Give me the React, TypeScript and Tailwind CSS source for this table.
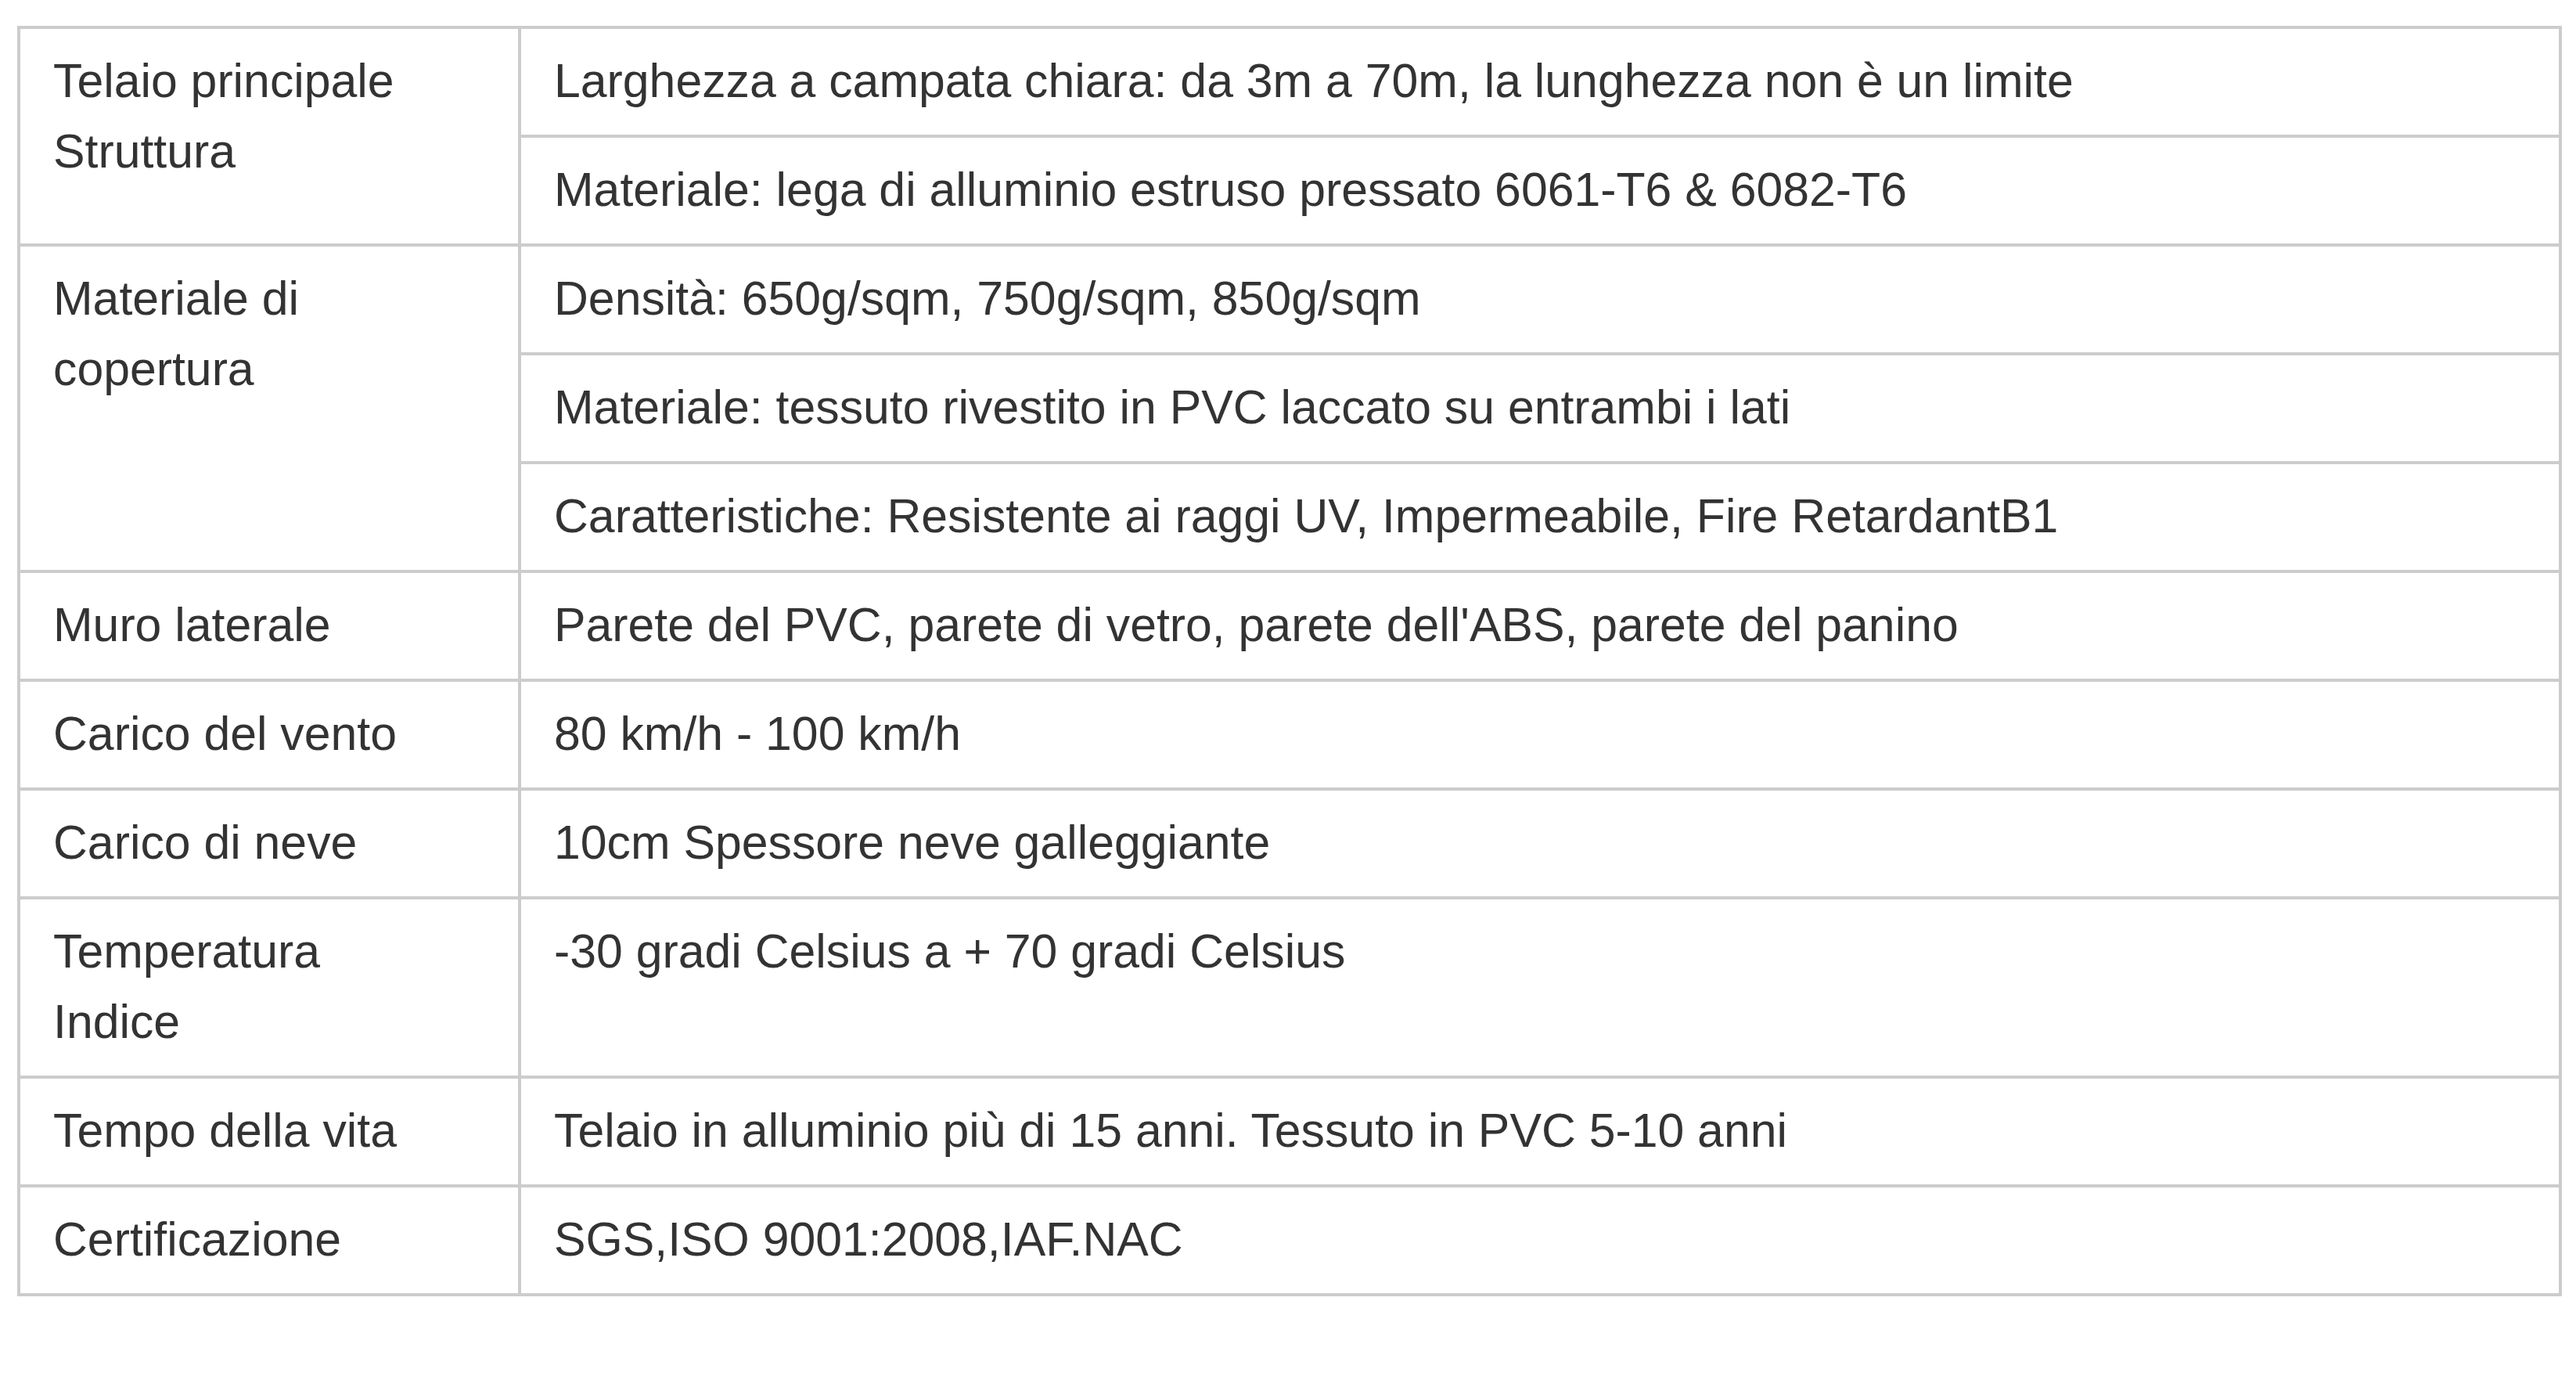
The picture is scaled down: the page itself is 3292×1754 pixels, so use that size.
const rows: { label: string[]; values: string[] }[] = [
  {
    label: ['Telaio principale', 'Struttura'],
    values: [
      'Larghezza a campata chiara: da 3m a 70m, la lunghezza non è un limite',
      'Materiale: lega di alluminio estruso pressato 6061-T6 & 6082-T6',
    ],
  },
  {
    label: ['Materiale di', 'copertura'],
    values: [
      'Densità: 650g/sqm, 750g/sqm, 850g/sqm',
      'Materiale: tessuto rivestito in PVC laccato su entrambi i lati',
      'Caratteristiche: Resistente ai raggi UV, Impermeabile, Fire RetardantB1',
    ],
  },
  { label: ['Muro laterale'], values: ["Parete del PVC, parete di vetro, parete dell'ABS, parete del panino"] },
  { label: ['Carico del vento'], values: ['80 km/h - 100 km/h'] },
  { label: ['Carico di neve'], values: ['10cm Spessore neve galleggiante'] },
  { label: ['Temperatura', 'Indice'], values: ['-30 gradi Celsius a + 70 gradi Celsius'] },
  { label: ['Tempo della vita'], values: ['Telaio in alluminio più di 15 anni. Tessuto in PVC 5-10 anni'] },
  { label: ['Certificazione'], values: ['SGS,ISO 9001:2008,IAF.NAC'] },
];

const cell = 'border-4 border-[#cccccc] pl-[42px] pr-[20px] pt-[21px] pb-[24px] align-top';

export default function App() {
  return (
    <div className="min-h-screen bg-white pt-[33px] pl-[22px] font-['Liberation_Sans',Arial,sans-serif] text-[60.75px] leading-[90px] text-[#333333]">
      <table className="w-[3252px] table-fixed border-collapse">
        <colgroup>
          <col className="w-[640px]" />
          <col />
        </colgroup>
        <tbody>
          {rows.map((row) =>
            row.values.map((value, i) => (
              <tr key={row.label.join(' ') + i}>
                {i === 0 && (
                  <td rowSpan={row.values.length} className={cell}>
                    {row.label.map((line) => (
                      <div key={line}>{line}</div>
                    ))}
                  </td>
                )}
                <td className={cell}>{value}</td>
              </tr>
            )),
          )}
        </tbody>
      </table>
    </div>
  );
}
